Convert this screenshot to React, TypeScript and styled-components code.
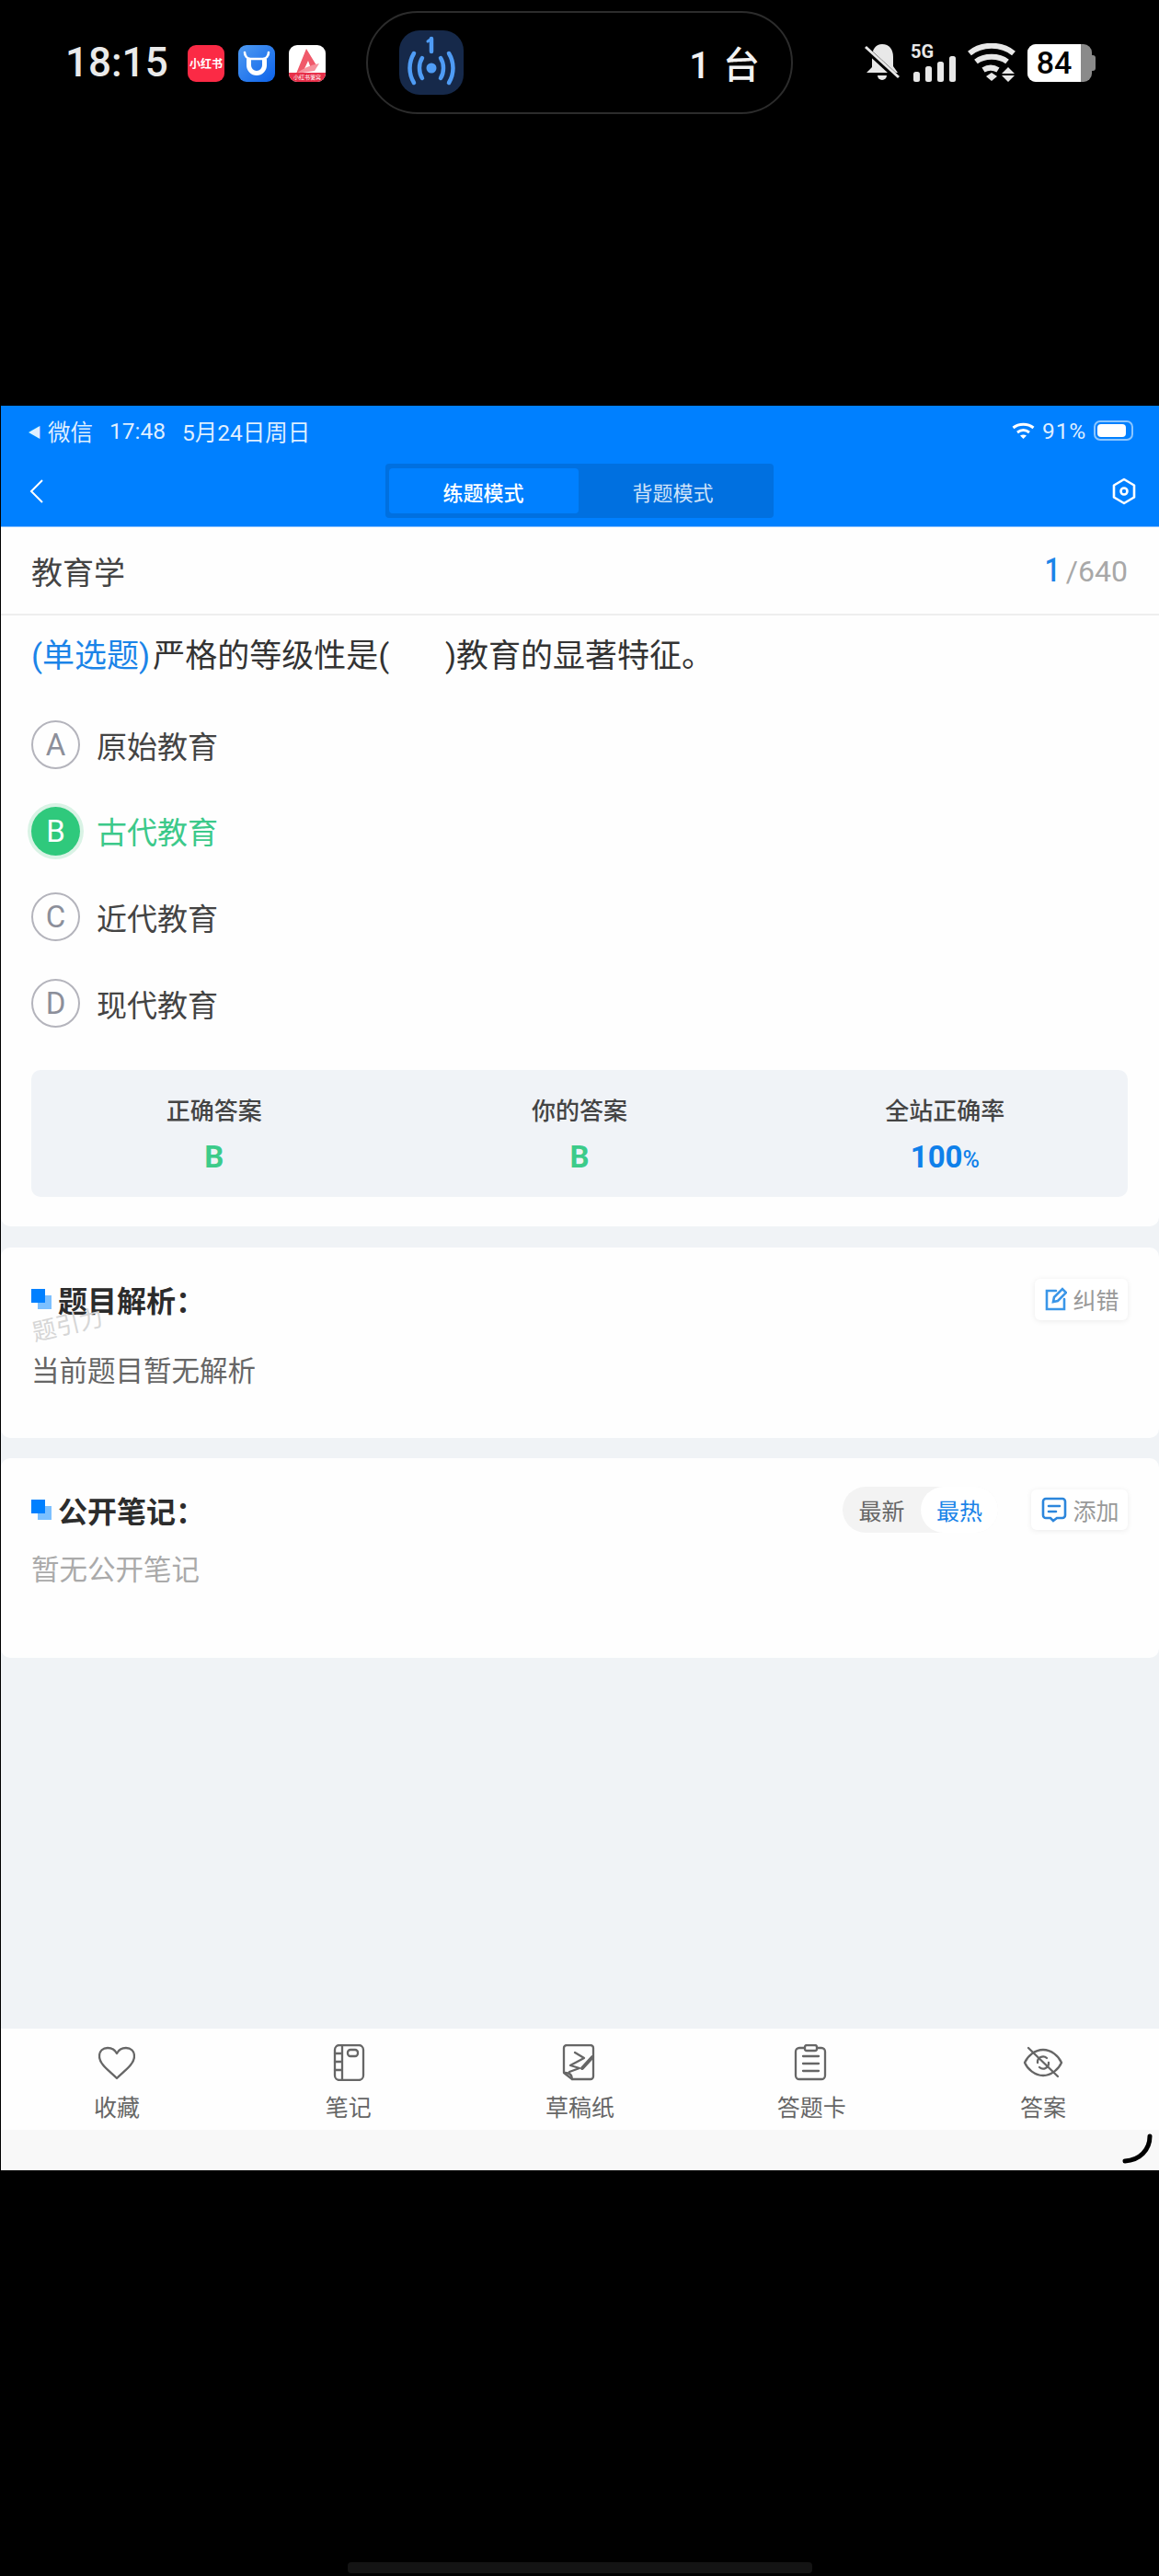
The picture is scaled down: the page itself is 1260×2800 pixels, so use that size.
import React from "react";
import styled, { createGlobalStyle } from "styled-components";

const FONT = `Roboto, "Noto Sans CJK SC", sans-serif`;

const Global = createGlobalStyle`
  html, body { margin: 0; padding: 0; background: #000; }
  * { box-sizing: border-box; }
  body { font-family: ${FONT}; }
`;

const Screen = styled.div`
  width: 1260px;
  height: 2800px;
  background: #000;
  display: flex;
  flex-direction: column;
  overflow: hidden;
`;

/* ---------- phone status bar ---------- */
const PhoneBar = styled.div`
  height: 441px;
  padding-top: 12px;
  display: grid;
  grid-template-columns: 398px 464px 1fr;
  align-items: start;
  color: #eee;
`;
const PhoneLeft = styled.div`
  height: 112px;
  padding-left: 71px;
  display: flex;
  align-items: center;
`;
const PhoneTime = styled.span`
  font-size: 44px;
  font-weight: 500;
  width: 133px;
  color: #eaeaea;
`;
const AppIcons = styled.div`
  display: flex;
  gap: 15px;
  margin-top: 1px;
`;
const AppIcon = styled.div<{ $bg: string }>`
  position: relative;
  width: 40px;
  height: 40px;
  border-radius: 9px;
  background: ${(p) => p.$bg};
  overflow: hidden;
  display: flex;
  align-items: center;
  justify-content: center;
`;
const RedBookText = styled.span`
  font-size: 12px;
  font-weight: 700;
  color: #fff;
  white-space: nowrap;
`;
const TinyStrip = styled.div`
  position: absolute;
  left: 0;
  right: 0;
  bottom: 0;
  height: 10px;
  background: #e8304a;
  color: #fff;
  font-size: 6px;
  line-height: 10px;
  text-align: center;
  white-space: nowrap;
`;
const Pill = styled.div`
  height: 112px;
  border: 2px solid #2c2c2c;
  border-radius: 56px;
  display: flex;
  align-items: center;
  justify-content: space-between;
  padding: 0 32px 0 34px;
`;
const PillIcon = styled.div`
  width: 70px;
  height: 70px;
  border-radius: 22px;
  background: #16294a;
  display: flex;
  align-items: center;
  justify-content: center;
`;
const PillText = styled.span`
  font-size: 40px;
  font-weight: 500;
  color: #f2f2f2;
  letter-spacing: 2px;
`;
const PhoneRight = styled.div`
  height: 112px;
  padding-left: 78px;
  display: flex;
  align-items: center;
`;
const Battery = styled.div`
  position: relative;
  width: 70px;
  height: 41px;
  margin-left: 13px;
  border-radius: 9px;
  overflow: hidden;
  background: #8a8a8a;
  display: flex;
`;
const BatteryFill = styled.div`
  width: 58px;
  background: #fff;
  color: #000;
  font-size: 34px;
  font-weight: 500;
  line-height: 41px;
  text-align: center;
`;
const BatteryNub = styled.div`
  width: 4px;
  height: 17px;
  background: #8a8a8a;
  border-radius: 0 3px 3px 0;
`;

/* ---------- app frame ---------- */
const Frame = styled.div`
  height: 1918px;
  margin-left: 1px;
  background: #f0f3f6;
  display: flex;
  flex-direction: column;
`;
const BlueHead = styled.header`
  height: 132px;
  background: #0080ff;
  border-bottom: 1px solid #7dbcff;
  color: #fff;
`;
const WxBar = styled.div`
  height: 54px;
  padding: 0 28px 0 29px;
  display: flex;
  align-items: center;
  font-size: 24.5px;
  color: rgba(255, 255, 255, 0.88);
`;
const WxBack = styled.span`
  font-size: 15px;
  margin-right: 7px;
`;
const WxTime = styled.span`
  margin-left: 18px;
`;
const WxDate = styled.span`
  margin-left: 18px;
`;
const WxRight = styled.div`
  margin-left: auto;
  display: flex;
  align-items: center;
  gap: 8px;
`;
const WxPercent = styled.span`
  letter-spacing: 0.8px;
`;
const WxBattery = styled.div`
  width: 43px;
  height: 22px;
  border: 2px solid rgba(255, 255, 255, 0.55);
  border-radius: 7px;
  padding: 2px;
  &::after {
    content: "";
    display: block;
    width: 88%;
    height: 100%;
    background: #fff;
    border-radius: 4px;
  }
`;
const NavRow = styled.nav`
  height: 77px;
  padding: 0 24px 0 31px;
  display: flex;
  align-items: center;
  justify-content: space-between;
`;
const Segment = styled.div`
  width: 422px;
  height: 59px;
  margin-left: 3px;
  padding: 5px 4px;
  background: #0070e0;
  border-radius: 4px;
  display: flex;
`;
const SegTab = styled.div<{ $on?: boolean }>`
  width: 206px;
  background: ${(p) => (p.$on ? "#0080ff" : "transparent")};
  border-radius: 4px;
  font-size: 22px;
  font-weight: ${(p) => (p.$on ? 500 : 400)};
  color: ${(p) => (p.$on ? "#fff" : "rgba(255,255,255,.82)")};
  display: flex;
  align-items: center;
  justify-content: center;
`;

const MainCard = styled.section`
  height: 760px;
  background: #fefefe;
  border-radius: 0 0 10px 10px;
`;
const SubjectRow = styled.div`
  height: 96px;
  padding: 0 34px 0 33px;
  border-bottom: 2px solid #eeeeee;
  display: flex;
  align-items: center;
  justify-content: space-between;
`;
const Subject = styled.h1`
  margin: 0;
  font-size: 34px;
  font-weight: 400;
  color: #444;
`;
const Counter = styled.div`
  font-size: 32px;
  color: #a8a8a8;
  display: flex;
  align-items: baseline;
`;
const CounterNow = styled.span`
  color: #1b84e8;
  font-size: 36px;
  font-weight: 500;
  margin-right: 4px;
  transform: scaleX(0.85);
`;
const Question = styled.p`
  margin: 0;
  padding: 0 33px 4px;
  height: 94px;
  line-height: 90px;
  font-size: 35px;
  color: #333;
  white-space: pre;
`;
const QType = styled.span`
  color: #1b84e8;
  margin-right: 3px;
`;
const Options = styled.ul`
  list-style: none;
  margin: 0;
  padding: 0 33px;
`;
const Option = styled.li`
  height: 93.6px;
  display: flex;
  align-items: center;
  gap: 18px;
`;
const Bubble = styled.span<{ $on?: boolean }>`
  width: 53px;
  height: 53px;
  border-radius: 50%;
  border: ${(p) => (p.$on ? "none" : "2px solid #b4b4bc")};
  background: ${(p) => (p.$on ? "#2fc97c" : "transparent")};
  box-shadow: ${(p) => (p.$on ? "0 0 0 4px #d9f3e5" : "none")};
  color: ${(p) => (p.$on ? "#fff" : "#8c8f9a")};
  font-size: 33px;
  display: flex;
  align-items: center;
  justify-content: center;
  flex: none;
`;
const OptionText = styled.span<{ $on?: boolean }>`
  font-size: 33px;
  color: ${(p) => (p.$on ? "#3cc98a" : "#444")};
`;
const AnswerBox = styled.div`
  margin: 26px 34px 0 33px;
  height: 138px;
  background: #f0f3f7;
  border-radius: 10px;
  display: grid;
  grid-template-columns: repeat(3, 1fr);
`;
const AnswerCell = styled.div`
  display: flex;
  flex-direction: column;
  align-items: center;
  padding-top: 27px;
`;
const AnswerLabel = styled.div`
  font-size: 26px;
  line-height: 36px;
  font-weight: 500;
  color: #444;
`;
const AnswerValue = styled.div<{ $color: string }>`
  margin-top: 13px;
  font-size: 33px;
  line-height: 38px;
  font-weight: 700;
  color: ${(p) => p.$color};
`;
const Percent = styled.span`
  font-size: 25px;
  font-weight: 500;
`;

const Section = styled.section<{ $top: number; $h: number; $pad: number }>`
  position: relative;
  margin-top: ${(p) => p.$top}px;
  height: ${(p) => p.$h}px;
  padding: ${(p) => p.$pad}px 34px 0 33px;
  background: #fefefe;
  border-radius: 10px;
`;
const SectionHead = styled.div`
  display: flex;
  align-items: center;
`;
const TitleMark = styled.span`
  position: relative;
  width: 22px;
  height: 22px;
  margin-right: 7px;
  flex: none;
  &::before {
    content: "";
    position: absolute;
    right: 0;
    bottom: 0;
    width: 15px;
    height: 15px;
    background: #7cc0ff;
  }
  &::after {
    content: "";
    position: absolute;
    left: 0;
    top: 0;
    width: 15px;
    height: 15px;
    background: #0080ff;
  }
`;
const SectionTitle = styled.h2`
  margin: 0;
  font-size: 32px;
  font-weight: 700;
  color: #2c2c2c;
  margin-right: auto;
`;
const GhostButton = styled.div<{ $h: number; $w: number }>`
  width: ${(p) => p.$w}px;
  height: ${(p) => p.$h}px;
  background: #fff;
  border-radius: 6px;
  box-shadow: 0 1px 6px rgba(0, 0, 0, 0.08);
  display: flex;
  align-items: center;
  justify-content: center;
  gap: 6px;
  padding-left: 2px;
  font-size: 25px;
  color: #999;
`;
const Watermark = styled.span`
  position: absolute;
  left: 34px;
  top: 72px;
  font-size: 26px;
  color: #d6d6d6;
  transform: rotate(-13deg);
  transform-origin: left center;
`;
const SectionBody = styled.p<{ $color: string; $top: number }>`
  margin: ${(p) => p.$top}px 0 0;
  font-size: 30.5px;
  line-height: 42px;
  color: ${(p) => p.$color};
`;
const SortToggle = styled.div`
  width: 169px;
  height: 50px;
  margin-right: 36px;
  border-radius: 25px;
  background: #f3f3f3;
  display: flex;
  font-size: 25px;
`;
const SortItem = styled.span<{ $on?: boolean }>`
  width: ${(p) => (p.$on ? 84 : 85)}px;
  border-radius: 25px;
  background: ${(p) => (p.$on ? "#fff" : "transparent")};
  color: ${(p) => (p.$on ? "#1b84e8" : "#666")};
  display: flex;
  align-items: center;
  justify-content: center;
`;

const Filler = styled.div`
  flex: 1;
`;
const TabBar = styled.footer`
  height: 110px;
  background: #fefefe;
  padding-top: 17px;
  display: grid;
  grid-template-columns: repeat(5, 1fr);
`;
const TabItem = styled.div`
  display: flex;
  flex-direction: column;
  align-items: center;
  color: #666;
`;
const TabLabel = styled.span`
  margin-top: 13px;
  font-size: 25px;
  line-height: 34px;
`;
const SafeArea = styled.div`
  position: relative;
  height: 44px;
  background: #f8f8f8;
`;
const Spinner = styled.svg`
  position: absolute;
  left: 1216px;
  top: 2px;
`;
const HomeZone = styled.div`
  flex: 1;
  display: flex;
  align-items: flex-end;
  justify-content: center;
  padding-bottom: 3px;
`;
const HomeBar = styled.div`
  width: 505px;
  height: 12px;
  background: #141414;
  border-radius: 4px;
`;

const tabIcon = { fill: "none", stroke: "#666", strokeWidth: 2.3, strokeLinejoin: "round" as const, strokeLinecap: "round" as const };

const App: React.FC = () => (
  <Screen>
    <Global />
    <PhoneBar>
      <PhoneLeft>
        <PhoneTime>18:15</PhoneTime>
        <AppIcons>
          <AppIcon $bg="#fb2a45">
            <RedBookText>小红书</RedBookText>
          </AppIcon>
          <AppIcon $bg="linear-gradient(135deg,#4f9bf2,#0c62ea)">
            <svg width="32" height="32" viewBox="0 0 32 32" fill="none" stroke="#fff" strokeLinecap="round">
              <path d="M3 4c0 4 3 7 6 7h14c3 0 6-3 6-7" strokeWidth="2.6" />
              <path d="M7.500 12v6a8.500 8.500 0 0 0 17 0v-6" strokeWidth="5" />
            </svg>
          </AppIcon>
          <AppIcon $bg="#fff">
            <svg width="40" height="40" viewBox="0 0 40 40">
              <path d="M19 4 L30 22 L25 28 L21 17 L15 30 L8 31 Z" fill="#f0596a" />
              <path d="M8 31 Q20 22 33 20 L28 28 Z" fill="#f7929d" />
            </svg>
            <TinyStrip>小红书薯窝</TinyStrip>
          </AppIcon>
        </AppIcons>
      </PhoneLeft>
      <Pill>
        <PillIcon>
          <svg width="56" height="60" viewBox="0 0 56 60" fill="none" stroke="#4f9cf5" strokeLinecap="round">
            <path d="M28 4v14" strokeWidth="4.5" />
            <path d="M24 7l4-3" strokeWidth="3" />
            <circle cx="28" cy="36" r="5.5" fill="#4f9cf5" stroke="none" />
            <path d="M18 25c-4 6-4 16 0 22M38 25c4 6 4 16 0 22" strokeWidth="4.5" />
            <path d="M9 20c-6 10-6 22 0 32M47 20c6 10 6 22 0 32" strokeWidth="4.5" />
          </svg>
        </PillIcon>
        <PillText>1 台</PillText>
      </Pill>
      <PhoneRight>
        <svg width="38" height="42" viewBox="0 0 38 42" fill="#e8e8e8">
          <path d="M19 1c8 0 12 6 12 14v10l5 7H2l6-6V15c0-8 4-14 11-14z" />
          <path d="M14 35h10a5 5 0 0 1-10 0z" />
          <path d="M0 5 L37 39" stroke="#000" strokeWidth="6" />
          <path d="M1 4 L37 37" stroke="#e8e8e8" strokeWidth="3" />
        </svg>
        <svg width="50" height="42" viewBox="0 0 50 42" style={{ marginLeft: 12 }} fill="#e8e8e8">
          <text x="0" y="16" fontSize="20" fontWeight="700" fontFamily="Roboto, sans-serif">5G</text>
          <rect x="3" y="31" width="7" height="11" rx="2.5" />
          <rect x="16" y="25" width="7" height="17" rx="2.5" />
          <rect x="29" y="20" width="7" height="22" rx="2.5" />
          <rect x="42" y="14" width="7" height="28" rx="2.5" />
        </svg>
        <svg width="52" height="42" viewBox="0 0 52 42" style={{ marginLeft: 12 }} fill="none" stroke="#e8e8e8" strokeWidth="6">
          <path d="M2 11c13-11 35-11 48 0" />
          <path d="M9 20c9-7 25-7 34 0" />
          <path d="M17 29c5-3 11-3 16 0" />
          <path d="M20 36l6-4 6 4-6 5z" fill="#e8e8e8" stroke="none" />
          <path d="M44 26l7 7H37zM44 42l7-7H37z" fill="#e8e8e8" stroke="none" />
        </svg>
        <Battery>
          <BatteryFill>84</BatteryFill>
        </Battery>
        <BatteryNub />
      </PhoneRight>
    </PhoneBar>

    <Frame>
      <BlueHead>
        <WxBar>
          <WxBack>◀</WxBack>
          <span>微信</span>
          <WxTime>17:48</WxTime>
          <WxDate>5月24日周日</WxDate>
          <WxRight>
            <svg width="25" height="20" viewBox="0 0 25 20" fill="none" stroke="#fff" strokeWidth="3">
              <path d="M1.500 7c6-5 16-5 22 0" />
              <path d="M6 12c4-3 9-3 13 0" />
              <path d="M12.500 19l-3.500-3.500c2-1.500 5-1.500 7 0z" fill="#fff" stroke="none" />
            </svg>
            <WxPercent>91%</WxPercent>
            <WxBattery />
          </WxRight>
        </WxBar>
        <NavRow>
          <svg width="16" height="26" viewBox="0 0 16 26" fill="none" stroke="#fff" strokeWidth="2">
            <path d="M14 1L2 13l12 12" />
          </svg>
          <Segment>
            <SegTab $on>练题模式</SegTab>
            <SegTab>背题模式</SegTab>
          </Segment>
          <svg width="28" height="30" viewBox="0 0 28 30" fill="none" stroke="#fff" strokeWidth="2.6">
            <path d="M14 2l11 6.500v13L14 28 3 21.500v-13z" strokeLinejoin="round" />
            <circle cx="14" cy="15" r="3.500" />
          </svg>
        </NavRow>
      </BlueHead>

      <MainCard>
        <SubjectRow>
          <Subject>教育学</Subject>
          <Counter>
            <CounterNow>1</CounterNow>/640
          </Counter>
        </SubjectRow>
        <Question>
          <QType>(单选题)</QType>严格的等级性是(       )教育的显著特征。
        </Question>
        <Options>
          <Option>
            <Bubble>A</Bubble>
            <OptionText>原始教育</OptionText>
          </Option>
          <Option>
            <Bubble $on>B</Bubble>
            <OptionText $on>古代教育</OptionText>
          </Option>
          <Option>
            <Bubble>C</Bubble>
            <OptionText>近代教育</OptionText>
          </Option>
          <Option>
            <Bubble>D</Bubble>
            <OptionText>现代教育</OptionText>
          </Option>
        </Options>
        <AnswerBox>
          <AnswerCell>
            <AnswerLabel>正确答案</AnswerLabel>
            <AnswerValue $color="#3ccb8a">B</AnswerValue>
          </AnswerCell>
          <AnswerCell>
            <AnswerLabel>你的答案</AnswerLabel>
            <AnswerValue $color="#3ccb8a">B</AnswerValue>
          </AnswerCell>
          <AnswerCell>
            <AnswerLabel>全站正确率</AnswerLabel>
            <AnswerValue $color="#0f80ea">
              100<Percent>%</Percent>
            </AnswerValue>
          </AnswerCell>
        </AnswerBox>
      </MainCard>

      <Section $top={23} $h={207} $pad={33}>
        <SectionHead>
          <TitleMark />
          <SectionTitle>题目解析：</SectionTitle>
          <GhostButton $w={101} $h={45}>
            <svg width="24" height="26" viewBox="0 0 24 26" fill="none" stroke="#3a96e8" strokeWidth="2.6" strokeLinecap="round">
              <path d="M12 4H2v20h19V13" />
              <path d="M9 16l1-5L19 2l4 4-9 9z" />
            </svg>
            纠错
          </GhostButton>
        </SectionHead>
        <Watermark>题引力</Watermark>
        <SectionBody $color="#666" $top={35}>当前题目暂无解析</SectionBody>
      </Section>

      <Section $top={22} $h={217} $pad={31}>
        <SectionHead>
          <TitleMark />
          <SectionTitle>公开笔记：</SectionTitle>
          <SortToggle>
            <SortItem>最新</SortItem>
            <SortItem $on>最热</SortItem>
          </SortToggle>
          <GhostButton $w={105} $h={44}>
            <svg width="28" height="28" viewBox="0 0 28 28" fill="none" stroke="#2c86dc" strokeWidth="2.6" strokeLinecap="round">
              <path d="M5 2h18a3 3 0 0 1 3 3v15a3 3 0 0 1-3 3h-6l-4 3-3-3H5a3 3 0 0 1-3-3V5a3 3 0 0 1 3-3z" />
              <path d="M8 10h12M8 16h8" />
            </svg>
            添加
          </GhostButton>
        </SectionHead>
        <SectionBody $color="#aaa" $top={20}>暂无公开笔记</SectionBody>
      </Section>

      <Filler />

      <TabBar>
        <TabItem>
          <svg width="40" height="40" viewBox="0 0 40 40" {...tabIcon}>
            <path d="M20 37C12 29 1 22 1 13 1 7 5 4 10 4c4 0 8 2 10 6 2-4 6-6 10-6 5 0 9 3 9 9 0 9-11 16-19 24z" />
          </svg>
          <TabLabel>收藏</TabLabel>
        </TabItem>
        <TabItem>
          <svg width="40" height="40" viewBox="0 0 40 40" {...tabIcon}>
            <rect x="5" y="1" width="31" height="38" rx="5" />
            <path d="M13 1v38M5 10h8M5 19h8M5 28h8" />
            <rect x="19" y="6" width="11" height="7" rx="3" />
          </svg>
          <TabLabel>笔记</TabLabel>
        </TabItem>
        <TabItem>
          <svg width="40" height="40" viewBox="0 0 40 40" {...tabIcon}>
            <path d="M6 1h26a3 3 0 0 1 3 3v31a3 3 0 0 1-3 3H12L3 31V4a3 3 0 0 1 3-3z" />
            <path d="M4 31c4 0 8 1 8 7" />
            <path d="M15 9l10 6-15 8 10 3-11 4" />
            <path d="M23 26l11-12" strokeWidth="4" />
          </svg>
          <TabLabel>草稿纸</TabLabel>
        </TabItem>
        <TabItem>
          <svg width="40" height="40" viewBox="0 0 40 40" {...tabIcon}>
            <path d="M12 4H7a4 4 0 0 0-4 4v26a4 4 0 0 0 4 4h24a4 4 0 0 0 4-4V8a4 4 0 0 0-4-4h-4" />
            <rect x="13" y="1" width="13" height="6" rx="2" />
            <path d="M11 13h17M11 21h17M11 29h17" />
          </svg>
          <TabLabel>答题卡</TabLabel>
        </TabItem>
        <TabItem>
          <svg width="44" height="40" viewBox="0 0 44 40" {...tabIcon}>
            <path d="M2 20c3-7 11-14 20-14s17 7 20 14c-3 7-11 14-20 14S5 27 2 20z" />
            <path d="M16 20a6 6 0 0 1 10-5M28 20a6 6 0 0 1-10 5" />
            <path d="M6 4l32 31" />
          </svg>
          <TabLabel>答案</TabLabel>
        </TabItem>
      </TabBar>
      <SafeArea>
        <Spinner width="38" height="38" viewBox="0 0 38 38" fill="none" stroke="#000" strokeLinecap="round">
          <path d="M33 5C33 20 22 31 6 32" strokeWidth="5" />
        </Spinner>
      </SafeArea>
    </Frame>
    <HomeZone>
      <HomeBar />
    </HomeZone>
  </Screen>
);

export default App;
